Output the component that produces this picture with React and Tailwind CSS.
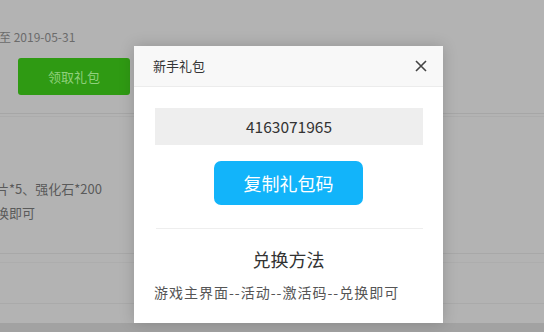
import React from 'react';

const App = () => {
  return (
    <div
      className="relative w-[544px] h-[332px] overflow-hidden bg-[#b3b3b3]"
      style={{ fontFamily: '"Noto Sans CJK SC", "Noto Sans", sans-serif' }}
    >
      {/* page behind the overlay */}
      <div className="pt-[28px]">
        <p className="text-[12px] leading-[18px] text-[#6b6b6b] -ml-[1px]">至 2019-05-31</p>
        <button className="ml-[18px] mt-[12px] w-[112px] h-[37px] rounded-[3px] bg-[#2f9a13] text-[13px] text-[#8fd07c]">
          领取礼包
        </button>
        <div className="mt-[18px] h-[1px] bg-[#a6a6a6]" />
        <div className="mt-[2px] h-[1px] bg-[#acacac]" />
        <div className="pt-[60px] text-[13px] leading-[24px] text-[#5a5a5a]">
          <p className="-ml-[4px]">片*5、强化石*200</p>
          <p className="-ml-[4px]">换即可</p>
        </div>
        <div className="mt-[28px] h-[1px] bg-[#a8a8a8]" />
        <div className="mt-[8px] h-[1px] bg-[#adadad]" />
        <div className="h-[40px]" />
        <div className="h-[1px] bg-[#aaaaaa]" />
        <div className="mt-[19px] h-[20px] bg-[#a2a2a2]" />
      </div>

      {/* dialog */}
      <div className="absolute left-[134px] top-[46px] w-[309px] h-[277px] bg-white shadow-[0_0_14px_rgba(0,0,0,0.18)]">
        <div className="h-[41px] bg-[#f8f8f8] border-b border-[#ececec] flex items-center justify-between pl-[19px] pr-[16px]">
          <span className="text-[13px] text-[#333]">新手礼包</span>
          <svg width="12" height="12" viewBox="0 0 12 12" className="text-[#444]">
            <path d="M1 1L11 11M11 1L1 11" stroke="currentColor" strokeWidth="1.6" />
          </svg>
        </div>
        <div className="px-[20px] pt-[21px]">
          <div className="ml-[1px] h-[37px] bg-[#eeeeee] flex items-center justify-center text-[15.5px] text-[#333]">
            4163071965
          </div>
          <div className="flex justify-center mt-[16px]">
            <button className="w-[149px] h-[44px] rounded-[7px] bg-[#12b4fa] text-white text-[18px]">
              复制礼包码
            </button>
          </div>
          <div className="mt-[23px] ml-[2px] h-[1px] bg-[#eeeeee]" />
          <p className="mt-[17px] text-center text-[18px] leading-[26px] text-[#333]">兑换方法</p>
          <p className="mt-[10px] text-[14px] leading-[20px] tracking-[1px] text-[#555]">游戏主界面--活动--激活码--兑换即可</p>
        </div>
      </div>
    </div>
  );
};

export default App;
